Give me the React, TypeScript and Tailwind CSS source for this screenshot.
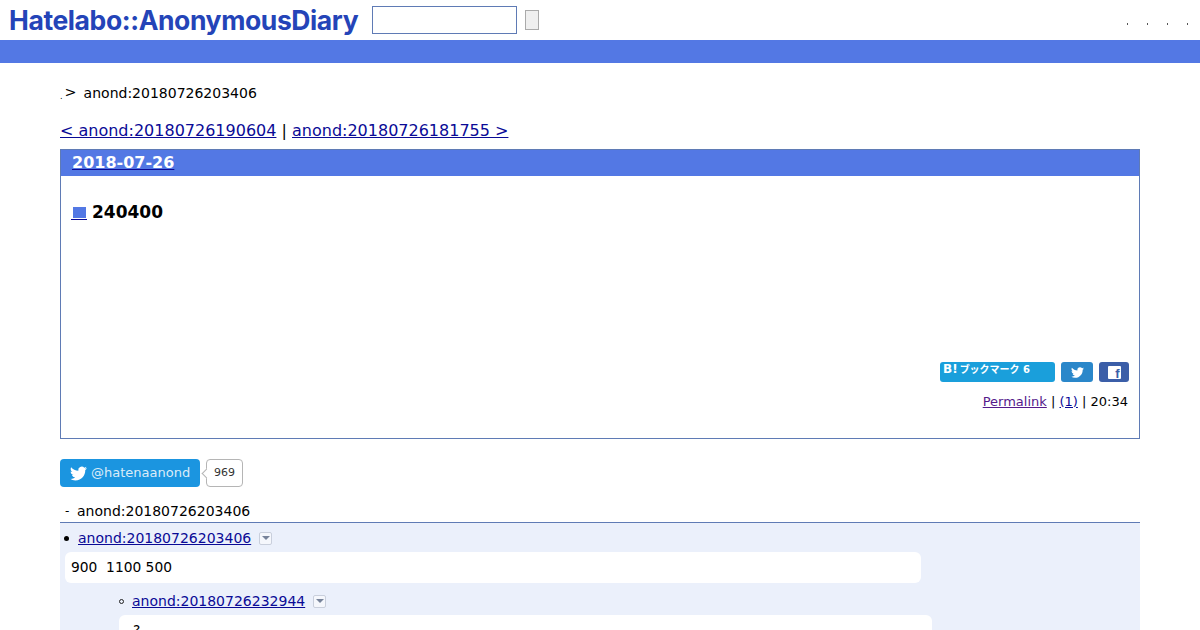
import React from 'react';

const TwitterBird = ({ className }: { className: string }) => (
  <svg viewBox="0 0 24 24" className={className} fill="currentColor">
    <path d="M23.95 4.57a10 10 0 0 1-2.82.77 4.96 4.96 0 0 0 2.16-2.72c-.95.55-2 .95-3.12 1.18a4.92 4.92 0 0 0-8.38 4.48C7.69 8.09 4.07 6.13 1.64 3.16a4.82 4.82 0 0 0-.67 2.48c0 1.71.87 3.21 2.19 4.1a4.9 4.9 0 0 1-2.23-.61v.06a4.92 4.92 0 0 0 3.95 4.83 5 5 0 0 1-2.21.08 4.94 4.94 0 0 0 4.6 3.42A9.87 9.87 0 0 1 0 19.54a14 14 0 0 0 7.56 2.21c9.05 0 14-7.5 14-13.98 0-.21 0-.42-.02-.63a9.94 9.94 0 0 0 2.46-2.55z" />
  </svg>
);

const MenuArrow = () => (
  <span className="ml-[8px] inline-flex h-[13px] w-[13px] items-center justify-center rounded-[2px] border border-[#c9cfdc] bg-[#f5f7fc] align-[-1px]">
    <span className="h-0 w-0 border-x-[4px] border-t-[4px] border-x-transparent border-t-[#77839a]" />
  </span>
);

const HeaderDot = () => <span className="h-[2px] w-px bg-[#555]" />;

const App = () => {
  return (
    <div className="h-[630px] overflow-hidden bg-white font-['DejaVu_Sans','Noto_Sans_CJK_JP',sans-serif] text-black">
      <header className="flex h-10 items-center">
        <div className="ml-[9px] w-[363px] whitespace-nowrap font-['Inter',sans-serif] text-[26.5px] leading-10 font-bold tracking-[-0.4px] text-[#2444b8]">
          Hatelabo::AnonymousDiary
        </div>
        <div className="h-7 w-[145px] border border-[#5f7bb5]" />
        <div className="ml-2 h-5 w-[14px] border border-[#aaa] bg-[#efefef]" />
        <div className="mt-[7px] mr-[12px] ml-auto flex gap-[19px]">
          <HeaderDot />
          <HeaderDot />
          <HeaderDot />
          <HeaderDot />
        </div>
      </header>
      <div className="h-[23px] bg-[#5378e4]" />

      <main className="mx-[60px]">
        <div className="mt-[21px] flex h-[18px] items-center text-[14px] leading-[18px]">
          <span className="mt-[8px] text-[8px] leading-none">.</span>
          <span className="mt-[-2px] ml-[2px] text-[14.4px]">&gt;</span>
          <span className="ml-[7px]">anond:20180726203406</span>
        </div>

        <div className="mt-[19px] h-[19px] text-base leading-[19px]">
          <a href="#" className="text-[#0a0a96] underline">&lt; anond:20180726190604</a>
          <span> | </span>
          <a href="#" className="text-[#0a0a96] underline">anond:20180726181755 &gt;</a>
        </div>

        <section className="mt-[9px] h-[290px] border border-[#5f7bb5]">
          <h3 className="h-[26px] bg-[#5378e4] pl-[11px] text-base leading-[25px] font-bold text-white">
            <a href="#" className="underline decoration-[#0a0a96]">2018-07-26</a>
          </h3>
          <h3 className="mt-[26px] flex h-[21px] items-center pl-[10px] text-[17px] leading-[21px] font-bold">
            <a href="#" className="flex h-[15px] w-[16px] items-end justify-center border-b border-[#0a0a96]">
              <span className="mb-px h-[11px] w-[13px] bg-[#5378e4]" />
            </a>
            <span className="ml-[5px]">240400</span>
          </h3>

          <div className="mt-[139px] mr-[10px] flex h-5 justify-end gap-[6px]">
            <div className="flex h-5 w-[115px] items-start rounded-[3px] bg-[#1a9fdb] pl-[3px] text-[12px] leading-[15px] font-bold text-white">
              B!<span className="ml-[2px] text-[10px]">ブックマーク 6</span>
            </div>
            <div className="flex h-5 w-[32px] items-center justify-center rounded-[3px] bg-[#2a87ca] text-white">
              <TwitterBird className="h-[13px] w-[13px]" />
            </div>
            <div className="flex h-5 w-[30px] items-end justify-center rounded-[3px] bg-[#3b5ea8]">
              <div className="relative mb-[3px] h-[13px] w-[13px] rounded-[1px] bg-white">
                <span className="absolute top-[1px] right-[1px] font-['Liberation_Sans',sans-serif] text-[13px] leading-[13px] font-bold text-[#3b5ea8]">f</span>
              </div>
            </div>
          </div>

          <div className="mt-[10px] mr-[11px] text-right text-[13px] leading-[19px]">
            <a href="#" className="text-[#551a8b] underline">Permalink</a>
            <span> | </span>
            <a href="#" className="text-[#0a0a96] underline">(1)</a>
            <span> | 20:34</span>
          </div>
        </section>

        <div className="mt-[20px] flex h-7 items-stretch">
          <a href="#" className="flex w-[140px] items-center rounded-[4px] bg-[#1b95e0] pl-[10px] text-[13px] text-[#dcecf8]">
            <TwitterBird className="h-[17px] w-[17px] text-white" />
            <span className="ml-[4px]">@hatenaanond</span>
          </a>
          <div className="relative ml-[6px] flex w-[37px] items-center justify-center rounded-[4px] border border-[#b5b5b5] text-[11px] text-[#333]">
            <span className="absolute top-[10px] left-[-4px] h-[7px] w-[7px] rotate-45 border-b border-l border-[#b5b5b5] bg-white" />
            969
          </div>
        </div>

        <div className="mt-[13px] flex h-[22px] items-center text-[14px] leading-[18px]">
          <span className="ml-[5px] w-3 text-[12px]">-</span>
          <span>anond:20180726203406</span>
        </div>

        <ul className="h-[200px] border-t border-[#5f7bb5] bg-[#ebf0fb] text-[14px]">
          <li className="pt-[6px]">
            <div className="flex h-[18px] items-center leading-[18px]">
              <span className="ml-[4px] h-[5px] w-[5px] rounded-full bg-black" />
              <a href="#" className="ml-[9px] text-[#0a0a96] underline">anond:20180726203406</a>
              <MenuArrow />
            </div>
            <div className="mt-[5px] ml-[5px] h-[31px] w-[856px] rounded-[6px] bg-white px-[6px] text-[13.8px] leading-[30px]">
              900&nbsp; 1100 500
            </div>
          </li>
          <li className="pt-[9px] pl-[58px]">
            <div className="flex h-[18px] items-center leading-[18px]">
              <span className="ml-[1px] h-[5px] w-[5px] rounded-full border border-[#222]" />
              <a href="#" className="ml-[8px] text-[#0a0a96] underline">anond:20180726232944</a>
              <MenuArrow />
            </div>
            <div className="mt-[5px] ml-[1px] h-[31px] w-[813px] rounded-[6px] bg-white px-[14px] text-[13.8px] leading-[30px]">
              ?
            </div>
          </li>
        </ul>
      </main>
    </div>
  );
};

export default App;
